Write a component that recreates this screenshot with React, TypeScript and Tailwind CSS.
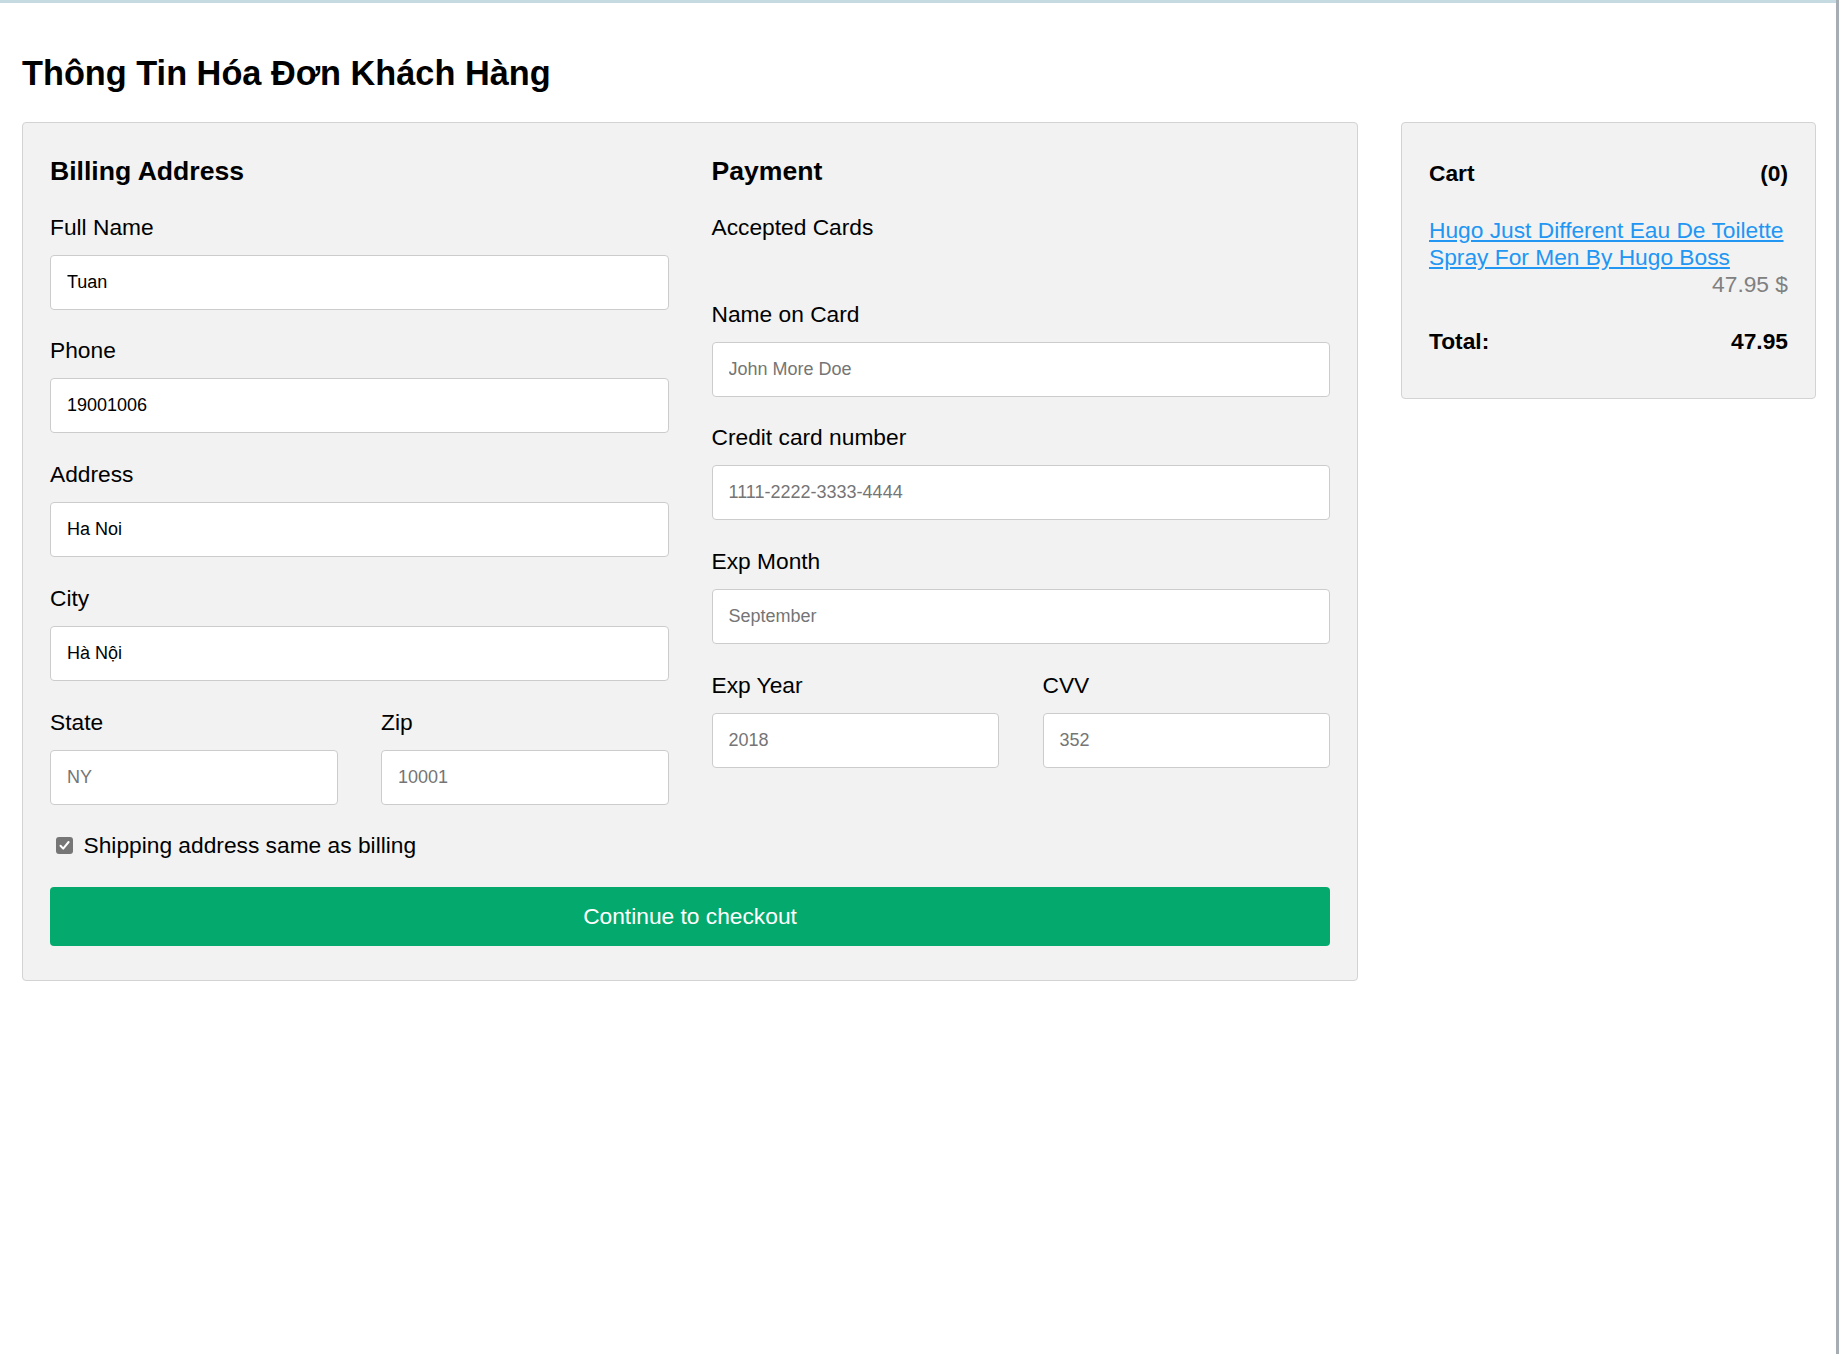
import React from "react";

const inputCls =
  "block w-full h-[55px] mb-[27.7px] border border-[#cccccc] rounded-[4px] bg-white px-[16px] text-[18px] text-black placeholder:text-[#757575] outline-none font-['Liberation_Sans',Arial,sans-serif]";

function Field({
  label,
  value,
  placeholder,
}: {
  label: string;
  value?: string;
  placeholder?: string;
}) {
  return (
    <div>
      <label className="block leading-[27px] mb-[14px]">{label}</label>
      <input
        className={inputCls}
        defaultValue={value}
        placeholder={placeholder}
        readOnly
      />
    </div>
  );
}

export default function App() {
  return (
    <div className="w-[1840px] min-h-[1354px] flex bg-white text-black font-['Liberation_Sans',Arial,sans-serif] text-[22.75px]">
      <div className="w-[1836px] border-t-[3px] border-[#c6dbe1]">
        <div className="pl-[22px] pt-[50px]">
          <h2 className="text-[34.3px] leading-[40px] font-bold">
            Thông Tin Hóa Đơn Khách Hàng
          </h2>
          <div className="mt-[29px] flex items-start gap-[43px]">
            {/* Left panel */}
            <div className="w-[1336px] border border-[#d3d3d3] rounded-[4px] bg-[#f2f2f2] pt-[6.75px] px-[27px] pb-[33.75px]">
              <div className="grid grid-cols-2 gap-x-[43px]">
                <div>
                  <h3 className="mt-[26px] mb-[27px] text-[26.6px] leading-[31px] font-bold">
                    Billing Address
                  </h3>
                  <Field label="Full Name" value="Tuan" />
                  <Field label="Phone" value="19001006" />
                  <Field label="Address" value="Ha Noi" />
                  <Field label="City" value="Hà Nội" />
                  <div className="grid grid-cols-2 gap-x-[43.5px]">
                    <Field label="State" placeholder="NY" />
                    <Field label="Zip" placeholder="10001" />
                  </div>
                </div>
                <div>
                  <h3 className="mt-[26px] mb-[27px] text-[26.6px] leading-[31px] font-bold">
                    Payment
                  </h3>
                  <label className="block leading-[27px] mb-[14px]">
                    Accepted Cards
                  </label>
                  <div className="h-[45.75px]" />
                  <Field label="Name on Card" placeholder="John More Doe" />
                  <Field
                    label="Credit card number"
                    placeholder="1111-2222-3333-4444"
                  />
                  <Field label="Exp Month" placeholder="September" />
                  <div className="grid grid-cols-2 gap-x-[43.5px]">
                    <Field label="Exp Year" placeholder="2018" />
                    <Field label="CVV" placeholder="352" />
                  </div>
                </div>
              </div>
              <div className="flex flex-col">
                <label className="flex items-center leading-[27px]">
                  <span className="ml-[5.5px] mr-[11px] w-[17px] h-[17px] rounded-[3px] bg-[#767676] flex items-center justify-center">
                    <svg width="13" height="13" viewBox="0 0 13 13">
                      <path
                        d="M2.5 6.8 L5.2 9.6 L10.6 3"
                        fill="none"
                        stroke="white"
                        strokeWidth="2"
                        strokeLinecap="round"
                        strokeLinejoin="round"
                      />
                    </svg>
                  </span>
                  Shipping address same as billing
                </label>
                <button className="mt-[28px] block w-full h-[59px] rounded-[4px] bg-[#04AA6D] text-white text-[22.75px] leading-[27px]">
                  Continue to checkout
                </button>
              </div>
            </div>

            {/* Cart */}
            <div className="w-[415px] border border-[#d3d3d3] rounded-[4px] bg-[#f2f2f2] pt-[6.75px] px-[27px] pb-[20.25px]">
              <h4 className="mt-[30px] mb-[30.6px] flex justify-between font-bold leading-[26.4px]">
                <span>Cart</span>
                <span>(0)</span>
              </h4>
              <div className="leading-[27.2px]">
                <a href="#" className="text-[#2196F3] underline">
                  Hugo Just Different Eau De Toilette Spray For Men By Hugo Boss
                </a>
                <div className="text-right text-[#808080]">47.95 $</div>
              </div>
              <div className="mt-[29.7px] mb-[22.5px] flex justify-between font-bold leading-[27.2px]">
                <span>Total:</span>
                <span>47.95</span>
              </div>
            </div>
          </div>
        </div>
      </div>
      <div className="w-[3px] bg-[#a6aeb3]" />
      <div className="w-[1px] bg-white" />
    </div>
  );
}
